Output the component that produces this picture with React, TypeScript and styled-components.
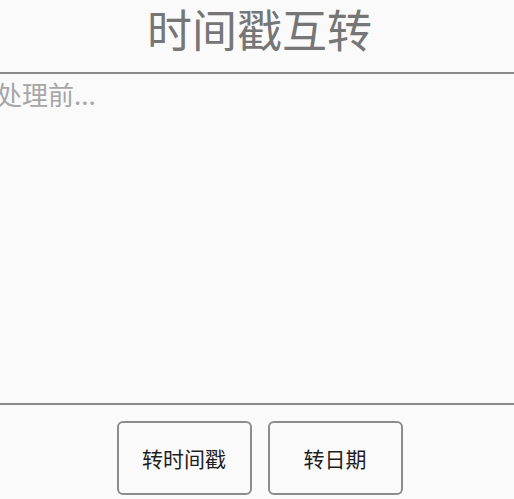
import React, { useState } from "react";
import styled, { createGlobalStyle } from "styled-components";

const GlobalStyle = createGlobalStyle`
  html, body {
    margin: 0;
    padding: 0;
    background: #fafafa;
    overflow: hidden;
  }
  body {
    font-family: "Noto Sans CJK SC", "Noto Sans", sans-serif;
  }
`;

const Page = styled.div`
  width: 514px;
  height: 499px;
  display: flex;
  flex-direction: column;
  background: #fafafa;
`;

const Title = styled.h1`
  margin: 0;
  padding: 0 0 0 5px;
  height: 72px;
  line-height: 58px;
  text-align: center;
  font-size: 45px;
  font-weight: 400;
  color: #767676;
  border-bottom: 2px solid #8a8a8a;
`;

const Input = styled.textarea`
  flex: 0 0 331px;
  margin: 0 0 0 -4px;
  padding: 3px 0 0 0;
  width: calc(100% + 4px);
  box-sizing: border-box;
  border: none;
  border-bottom: 2px solid #8a8a8a;
  background: transparent;
  resize: none;
  outline: none;
  font-family: inherit;
  font-size: 26px;
  line-height: 34px;
  color: #333;

  &::placeholder {
    color: #a6a6a6;
  }
`;

const Actions = styled.div`
  display: flex;
  justify-content: center;
  gap: 16px;
  padding: 16px 0 0 5px;
`;

const Button = styled.button<{ $w: number }>`
  width: ${(p) => p.$w}px;
  height: 74px;
  border: 2px solid #8c8c8c;
  border-radius: 6px;
  background: #fafafa;
  font-family: inherit;
  font-size: 21px;
  color: #1e1e1e;
  cursor: pointer;
`;

export default function App() {
  const [value, setValue] = useState("");

  return (
    <>
      <GlobalStyle />
      <Page>
        <Title>时间戳互转</Title>
        <Input
          placeholder="处理前..."
          value={value}
          onChange={(e) => setValue(e.target.value)}
        />
        <Actions>
          <Button $w={135}>转时间戳</Button>
          <Button $w={135}>转日期</Button>
        </Actions>
      </Page>
    </>
  );
}
